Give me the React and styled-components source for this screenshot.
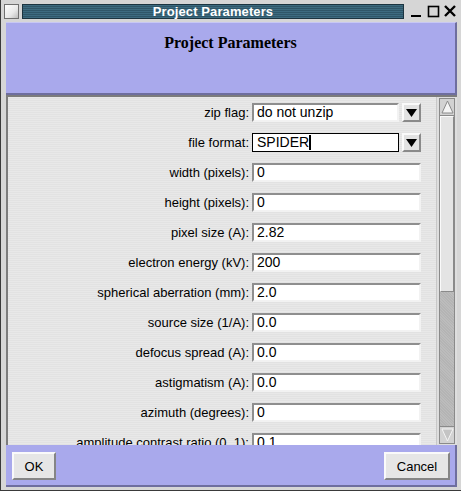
import styled, { createGlobalStyle } from "styled-components";

const GlobalStyle = createGlobalStyle`
  html, body {
    margin: 0;
    padding: 0;
    background: #d6d6d6;
  }
  * {
    box-sizing: border-box;
  }
`;

const fields = [
  { label: "zip flag:", value: "do not unzip", combo: true },
  { label: "file format:", value: "SPIDER", combo: true, focused: true },
  { label: "width (pixels):", value: "0" },
  { label: "height (pixels):", value: "0" },
  { label: "pixel size (A):", value: "2.82" },
  { label: "electron energy (kV):", value: "200" },
  { label: "spherical aberration (mm):", value: "2.0" },
  { label: "source size (1/A):", value: "0.0" },
  { label: "defocus spread (A):", value: "0.0" },
  { label: "astigmatism (A):", value: "0.0" },
  { label: "azimuth (degrees):", value: "0" },
  { label: "amplitude contrast ratio (0..1):", value: "0.1" },
];

const Window = styled.div`
  width: 461px;
  height: 491px;
  display: flex;
  flex-direction: column;
  background: #d6d6d6;
  border-left: 1px solid #3a3a3a;
  border-bottom: 1px solid #3a3a3a;
  font-family: "Liberation Sans", Arial, sans-serif;
  overflow: hidden;
`;

const TitleBar = styled.div`
  height: 22px;
  display: flex;
  align-items: center;
  padding: 3px 2px 3px 3px;
  gap: 3px;
`;

const MenuBox = styled.div`
  width: 15px;
  height: 15px;
  border: 1px solid #707070;
  background: linear-gradient(135deg, #ffffff 0%, #e8e8e8 60%, #bcbcbc 100%);
`;

const TitleStrip = styled.div`
  flex: 1;
  height: 15px;
  display: flex;
  align-items: center;
  justify-content: center;
  border: 1px solid #1c3440;
  background: repeating-linear-gradient(
    to bottom,
    #3d6b80 0px,
    #3d6b80 1px,
    #2f5668 1px,
    #2f5668 2px
  );
  color: #ffffff;
  font-weight: bold;
  font-size: 13px;
  letter-spacing: 0.1px;
`;

const WinButtons = styled.div`
  display: flex;
  align-items: center;
  gap: 3px;
  padding: 0 2px 0 2px;
`;

const WinButton = styled.svg`
  width: 14px;
  height: 14px;
  display: block;
`;

const Body = styled.div`
  flex: 1;
  display: flex;
  flex-direction: column;
  padding: 0 4px 2px 5px;
`;

const Header = styled.div`
  height: 73px;
  background: #a9a9ec;
  border-right: 2px solid #6e6e9e;
  border-bottom: 2px solid #6e6e9e;
  border-top: 1px solid #c8c8f4;
  display: flex;
  justify-content: center;
  padding-top: 11px;
  font-family: "Liberation Serif", "Times New Roman", serif;
  font-weight: bold;
  font-size: 16px;
  color: #000;
`;

const ScrollPane = styled.div`
  height: 350px;
  display: flex;
  border-top: 2px solid #7c7c7c;
  border-left: 2px solid #7c7c7c;
`;

const Content = styled.div`
  flex: 1;
  overflow: hidden;
  padding-top: 6px;
  background: repeating-linear-gradient(
    to bottom,
    #e8e8e8 0px,
    #e8e8e8 1px,
    #e2e2e2 1px,
    #e2e2e2 2px
  );
`;

const Row = styled.div`
  display: grid;
  grid-template-columns: 241px 169px;
  column-gap: 3px;
  align-items: center;
  height: 19px;
  margin-bottom: 11px;
`;

const Label = styled.div`
  text-align: right;
  font-size: 13px;
  color: #000;
  white-space: nowrap;
`;

const Control = styled.div`
  display: flex;
  gap: 3px;
  height: 19px;
`;

const Field = styled.div`
  flex: 1;
  height: 19px;
  background: #ffffff;
  font-size: 14px;
  line-height: 15px;
  color: #000;
  white-space: nowrap;
  overflow: hidden;
  border-style: solid;
  border-color: ${(p) =>
    p.$focused ? "#000 #000 #000 #000" : "#8e8e8e #f2f2f2 #f2f2f2 #8e8e8e"};
  border-width: ${(p) => (p.$focused ? "1px" : "2px")};
  padding-top: ${(p) => (p.$focused ? "1px" : "0")};
  padding-left: ${(p) => (p.$focused ? "4px" : "3px")};
`;

const Caret = styled.span`
  display: inline-block;
  width: 2px;
  height: 15px;
  background: #000;
  vertical-align: top;
`;

const ArrowButton = styled.div`
  width: 19px;
  height: 19px;
  background: #e2e2e2;
  border: 2px solid;
  border-color: #fafafa #8a8a8a #8a8a8a #fafafa;
  display: flex;
  align-items: center;
  justify-content: center;
`;

const Scrollbar = styled.div`
  width: 21px;
  display: flex;
  flex-direction: column;
  background: #dedede;
  border-left: 1px solid #c8c8c8;
  padding: 1px 2px 1px 2px;
`;

const ScrollArrow = styled.div`
  height: 18px;
  background: #d2d2d2;
  border: 1px solid #8a8a8a;
  display: flex;
  align-items: center;
  justify-content: center;
`;

const Track = styled.div`
  flex: 1;
  display: flex;
  flex-direction: column;
  background: repeating-linear-gradient(
    45deg,
    #b4b4b4 0px,
    #b4b4b4 1px,
    #bcbcbc 1px,
    #bcbcbc 2px
  );
  border-left: 1px solid #8a8a8a;
  border-right: 1px solid #8a8a8a;
`;

const Thumb = styled.div`
  height: 176px;
  background: #e4e4e4;
  border: 1px solid;
  border-color: #fafafa #8a8a8a #8a8a8a #fafafa;
`;

const Footer = styled.div`
  height: 42px;
  background: #a9a9ec;
  border-right: 2px solid #6e6e9e;
  border-bottom: 2px solid #6e6e9e;
  display: flex;
  align-items: flex-start;
  justify-content: space-between;
  padding: 7px 5px 0 6px;
`;

const Button = styled.button`
  height: 28px;
  min-width: ${(p) => p.$width}px;
  background: #e6e6e6;
  border: 2px solid;
  border-color: #fafafa #858585 #858585 #fafafa;
  font-family: "Liberation Sans", Arial, sans-serif;
  font-size: 13px;
  color: #000;
  padding: 0 6px;
`;

function ComboArrow() {
  return (
    <svg width="11" height="8" viewBox="0 0 11 8">
      <polygon points="0,0 11,0 5.5,8" fill="#000" />
    </svg>
  );
}

export default function App() {
  return (
    <>
      <GlobalStyle />
      <Window>
        <TitleBar>
          <MenuBox />
          <TitleStrip>Project Parameters</TitleStrip>
          <WinButtons>
            <WinButton viewBox="0 0 14 14">
              <rect x="2" y="11" width="10" height="2" fill="#000" />
            </WinButton>
            <WinButton viewBox="0 0 14 14">
              <rect x="2.5" y="2.5" width="10" height="10" fill="none" stroke="#000" strokeWidth="1.6" />
            </WinButton>
            <WinButton viewBox="0 0 14 14">
              <path d="M2 2 L12 12 M12 2 L2 12" stroke="#000" strokeWidth="2.4" />
            </WinButton>
          </WinButtons>
        </TitleBar>
        <Body>
          <Header>Project Parameters</Header>
          <ScrollPane>
            <Content>
              {fields.map((f) => (
                <Row key={f.label}>
                  <Label>{f.label}</Label>
                  <Control>
                    <Field $focused={f.focused}>
                      {f.value}
                      {f.focused && <Caret />}
                    </Field>
                    {f.combo && (
                      <ArrowButton>
                        <ComboArrow />
                      </ArrowButton>
                    )}
                  </Control>
                </Row>
              ))}
            </Content>
            <Scrollbar>
              <ScrollArrow>
                <svg width="13" height="14" viewBox="0 0 13 14">
                  <polygon points="6.5,1 12,13 1,13" fill="#f4f4f4" stroke="#8a8a8a" />
                </svg>
              </ScrollArrow>
              <Track>
                <Thumb />
              </Track>
              <ScrollArrow>
                <svg width="13" height="14" viewBox="0 0 13 14">
                  <polygon points="1,1 12,1 6.5,13" fill="#c4c4c4" stroke="#f4f4f4" />
                </svg>
              </ScrollArrow>
            </Scrollbar>
          </ScrollPane>
          <Footer>
            <Button $width={44}>OK</Button>
            <Button $width={66}>Cancel</Button>
          </Footer>
        </Body>
      </Window>
    </>
  );
}
